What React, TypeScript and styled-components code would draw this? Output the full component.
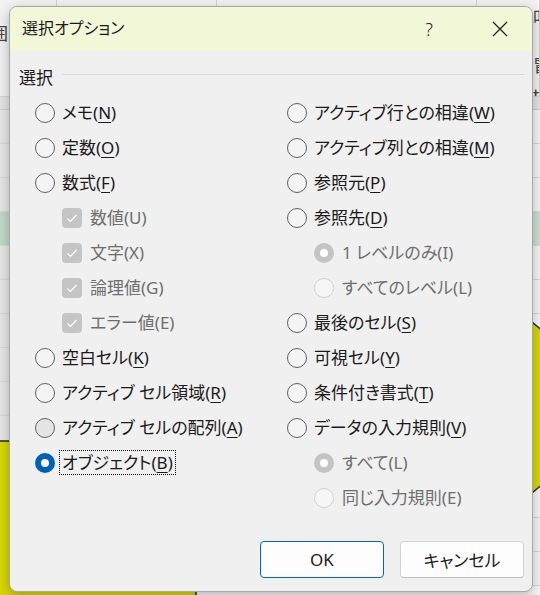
import React from 'react';
import styled, {createGlobalStyle} from 'styled-components';

const GlobalStyle = createGlobalStyle`
  html, body {
    margin: 0;
    padding: 0;
  }
  body {
    width: 540px;
    height: 595px;
    overflow: hidden;
    font-family: "Noto Sans", "Noto Sans CJK JP", sans-serif;
  }
`;

const Desktop = styled.div`
  position: relative;
  width: 540px;
  height: 595px;
  overflow: hidden;
  background: #f7f7f7;
`;

// ---- spreadsheet behind the dialog ----

const Sheet = styled.div`
  display: flex;
  flex-direction: column;
  width: 100%;
  height: 100%;
`;

const Ribbon = styled.div`
  display: grid;
  grid-template-columns: 57px 160px 260px 1fr;
  height: 96px;
  flex-shrink: 0;
  background: #f3f3f3;
  border-bottom: 1px solid #d6d6d6;
`;

const RibbonGroup = styled.div`
  border-right: 1px solid #d2d2d2;
  display: flex;
  flex-direction: column;
  font-family: "Noto Sans CJK JP", sans-serif;
  color: #444;
  overflow: hidden;
`;

const RibbonGlyph = styled.span<{$top: number; $left: number}>`
  margin-top: ${p => p.$top}px;
  margin-left: ${p => p.$left}px;
  font-size: 17px;
  line-height: 18px;
`;

const ColHeader = styled.div`
  height: 12px;
  flex-shrink: 0;
  background: #e6e6e6;
  border-bottom: 1px solid #cfcfcf;
`;

const SheetRow = styled.div<{$sel?: boolean}>`
  display: flex;
  height: 33px;
  flex-shrink: 0;
  background: ${p => (p.$sel ? '#cde2d4' : '#f8f8f8')};
  border-bottom: 1px solid #d9d9d9;
`;

const RowHead = styled.div<{$sel?: boolean}>`
  width: 9px;
  background: ${p => (p.$sel ? '#c2dccb' : '#e9e9e9')};
  border-right: 1px solid #d0d0d0;
`;

const Shapes = styled.svg`
  position: absolute;
  left: 0;
  top: 0;
`;

// ---- dialog ----

const Dialog = styled.div`
  position: absolute;
  left: 9px;
  top: 6px;
  width: 522px;
  height: 584px;
  display: flex;
  flex-direction: column;
  background: #f0f0f0;
  border: 1px solid #a8a8a8;
  border-radius: 8px;
  box-shadow: 0 4px 14px rgba(0, 0, 0, 0.28);
  overflow: hidden;
  color: #1a1a1a;
  font-feature-settings: "palt";
`;

const TitleBar = styled.div`
  display: flex;
  align-items: center;
  height: 44px;
  flex-shrink: 0;
  background: #f1f7d7;
  padding-left: 12px;
`;

const Title = styled.div`
  flex: 1;
  font-size: 16px;
  line-height: 22px;
  margin-top: -2px;
`;

const TitleButton = styled.div<{$w: number}>`
  width: ${p => p.$w}px;
  height: 100%;
  display: flex;
  align-items: center;
  justify-content: center;
  font-size: 18px;
  font-family: "Noto Sans", sans-serif;
  font-weight: 300;
  color: #222;
`;

const Body = styled.div`
  flex: 1;
  display: flex;
  flex-direction: column;
  padding: 15px 8px 13px 9px;
`;

const GroupHeader = styled.div`
  display: flex;
  align-items: center;
  height: 20px;
  font-size: 17px;
`;

const GroupLine = styled.div`
  flex: 1;
  height: 1px;
  margin-left: 9px;
  margin-top: -3px;
  background: #d9d9d9;
`;

const Columns = styled.div`
  display: grid;
  grid-template-columns: 252px 1fr;
  margin-top: 9px;
  padding-left: 16px;
`;

const Column = styled.div`
  display: flex;
  flex-direction: column;
`;

const Row = styled.div<{$nested?: boolean}>`
  display: flex;
  align-items: center;
  height: 35px;
  gap: ${p => (p.$nested ? 8 : 7)}px;
  padding-left: ${p => (p.$nested ? 27 : 0)}px;
`;

const Label = styled.span<{$disabled?: boolean; $focused?: boolean}>`
  font-size: 17px;
  line-height: 23px;
  white-space: pre;
  color: ${p => (p.$disabled ? '#6e6e6e' : '#1a1a1a')};
  border: 1px dotted ${p => (p.$focused ? '#000' : 'transparent')};
  padding: 0 2px;
  margin-left: -3px;

  u {
    text-decoration-thickness: 1px;
    text-underline-offset: 3px;
  }
`;

const Radio = styled.span<{$checked?: boolean; $disabled?: boolean; $hover?: boolean}>`
  box-sizing: border-box;
  width: 20px;
  height: 20px;
  border-radius: 50%;
  flex-shrink: 0;
  display: flex;
  align-items: center;
  justify-content: center;
  background: ${p =>
    p.$checked ? (p.$disabled ? '#c4c4c4' : '#005fb8') : p.$disabled ? '#f6f6f6' : p.$hover ? '#e4e4e4' : '#f4f4f4'};
  border: 1px solid
    ${p => (p.$checked ? 'transparent' : p.$disabled ? '#d0d0d0' : '#616161')};

  &::after {
    content: '';
    display: ${p => (p.$checked ? 'block' : 'none')};
    width: 8px;
    height: 8px;
    border-radius: 50%;
    background: #fff;
  }
`;

const Check = styled.span`
  width: 20px;
  height: 20px;
  border-radius: 4px;
  flex-shrink: 0;
  background: #c5c5c5;
  display: flex;
  align-items: center;
  justify-content: center;
`;

const Buttons = styled.div`
  margin-top: auto;
  display: flex;
  justify-content: flex-end;
  gap: 16px;
`;

const Button = styled.button<{$default?: boolean}>`
  width: 124px;
  height: 37px;
  border-radius: 4px;
  background: #fdfdfd;
  border: 1px solid ${p => (p.$default ? '#0067c0' : '#d3d3d3')};
  border-bottom-color: ${p => (p.$default ? '#0067c0' : '#bdbdbd')};
  font-family: "Noto Sans", "Noto Sans CJK JP", sans-serif;
  font-feature-settings: "palt";
  font-size: 17px;
  color: #1a1a1a;
  padding: 0;
`;

type Item = {
    kind: 'radio' | 'check';
    label: string;
    key: string;
    nested?: boolean;
    disabled?: boolean;
    checked?: boolean;
    focused?: boolean;
    hover?: boolean;
};

const leftItems: Item[] = [
    {kind: 'radio', label: 'メモ', key: 'N'},
    {kind: 'radio', label: '定数', key: 'O'},
    {kind: 'radio', label: '数式', key: 'F'},
    {kind: 'check', label: '数値', key: 'U', nested: true, disabled: true, checked: true},
    {kind: 'check', label: '文字', key: 'X', nested: true, disabled: true, checked: true},
    {kind: 'check', label: '論理値', key: 'G', nested: true, disabled: true, checked: true},
    {kind: 'check', label: 'エラー値', key: 'E', nested: true, disabled: true, checked: true},
    {kind: 'radio', label: '空白セル', key: 'K'},
    {kind: 'radio', label: 'アクティブ セル領域', key: 'R'},
    {kind: 'radio', label: 'アクティブ セルの配列', key: 'A', hover: true},
    {kind: 'radio', label: 'オブジェクト', key: 'B', checked: true, focused: true},
];

const rightItems: Item[] = [
    {kind: 'radio', label: 'アクティブ行との相違', key: 'W'},
    {kind: 'radio', label: 'アクティブ列との相違', key: 'M'},
    {kind: 'radio', label: '参照元', key: 'P'},
    {kind: 'radio', label: '参照先', key: 'D'},
    {kind: 'radio', label: '1 レベルのみ', key: 'I', nested: true, disabled: true, checked: true},
    {kind: 'radio', label: 'すべてのレベル', key: 'L', nested: true, disabled: true},
    {kind: 'radio', label: '最後のセル', key: 'S'},
    {kind: 'radio', label: '可視セル', key: 'Y'},
    {kind: 'radio', label: '条件付き書式', key: 'T'},
    {kind: 'radio', label: 'データの入力規則', key: 'V'},
    {kind: 'radio', label: 'すべて', key: 'L', nested: true, disabled: true, checked: true},
    {kind: 'radio', label: '同じ入力規則', key: 'E', nested: true, disabled: true},
];

const OptionRow = ({item}: {item: Item}) => (
    <Row $nested={item.nested}>
        {item.kind === 'radio' ? (
            <Radio $checked={item.checked} $disabled={item.disabled} $hover={item.hover}/>
        ) : (
            <Check>
                <svg width="20" height="20" viewBox="0 0 20 20">
                    <polyline points="5.5,10.5 8.5,13.5 14.5,7" fill="none" stroke="#fff" strokeWidth="1.2"/>
                </svg>
            </Check>
        )}
        <Label $disabled={item.disabled} $focused={item.focused}>
            {item.label}({item.disabled ? item.key : <u>{item.key}</u>})
        </Label>
    </Row>
);

const sheetRows = Array.from({length: 15}, (_, i) => i);

const App = () => {
    return (
        <Desktop>
            <GlobalStyle/>
            <Sheet>
                <Ribbon>
                    <RibbonGroup>
                        <RibbonGlyph $top={24} $left={-9}>囲</RibbonGlyph>
                    </RibbonGroup>
                    <RibbonGroup/>
                    <RibbonGroup/>
                    <RibbonGroup>
                        <RibbonGlyph $top={8} $left={56}>叩</RibbonGlyph>
                        <RibbonGlyph $top={30} $left={56}>冒</RibbonGlyph>
                        <RibbonGlyph $top={12} $left={56}>t</RibbonGlyph>
                    </RibbonGroup>
                </Ribbon>
                <ColHeader/>
                {sheetRows.map(i => (
                    <SheetRow key={i} $sel={i === 3}>
                        <RowHead $sel={i === 3}/>
                    </SheetRow>
                ))}
            </Sheet>

            <Shapes width="540" height="595" viewBox="0 0 540 595">
                <polygon points="-5,441 196,441 196,600 -5,600" fill="#d9d900" stroke="#1d2433" strokeWidth="1.5"/>
                <polygon points="505,300 560,345 560,470 505,515" fill="#d9d900" stroke="#1d2433" strokeWidth="1.5"/>
            </Shapes>

            <Dialog>
                <TitleBar>
                    <Title>選択オプション</Title>
                    <TitleButton $w={78}>?</TitleButton>
                    <TitleButton $w={64}>
                        <svg width="16" height="16" viewBox="0 0 16 16">
                            <path d="M1 1 L15 15 M15 1 L1 15" stroke="#222" strokeWidth="1.3"/>
                        </svg>
                    </TitleButton>
                </TitleBar>
                <Body>
                    <GroupHeader>
                        選択
                        <GroupLine/>
                    </GroupHeader>
                    <Columns>
                        <Column>
                            {leftItems.map((it, i) => <OptionRow key={i} item={it}/>)}
                        </Column>
                        <Column>
                            {rightItems.map((it, i) => <OptionRow key={i} item={it}/>)}
                        </Column>
                    </Columns>
                    <Buttons>
                        <Button $default>OK</Button>
                        <Button>キャンセル</Button>
                    </Buttons>
                </Body>
            </Dialog>
        </Desktop>
    );
};

export default App;
